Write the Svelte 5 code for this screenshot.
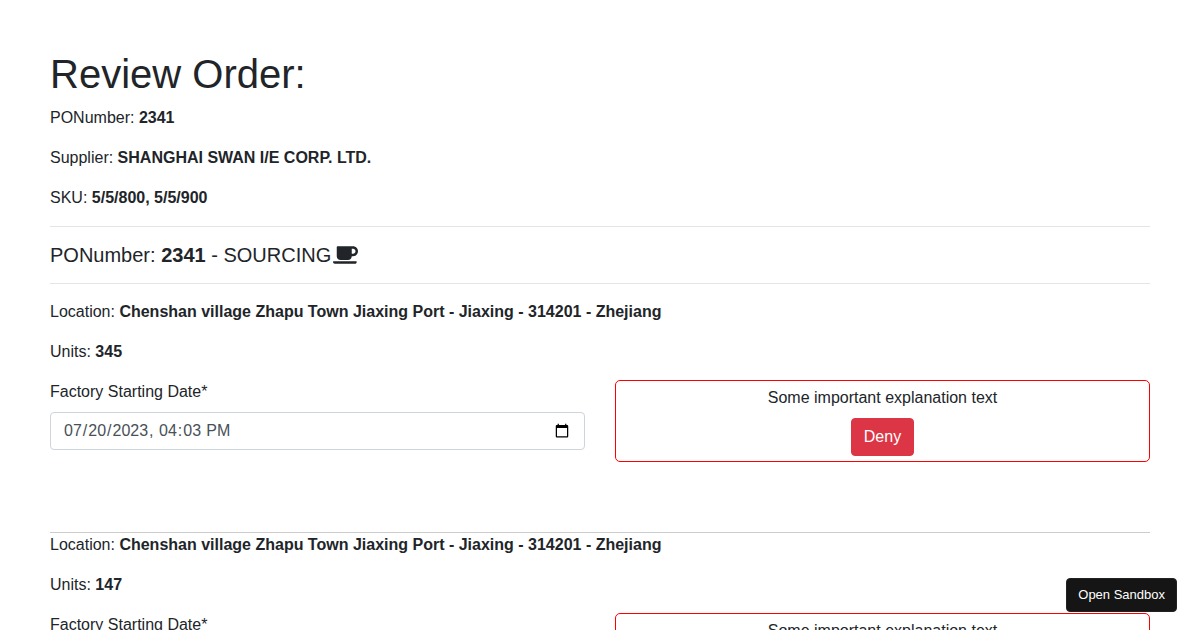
<script>
  const order = {
    number: '2341',
    supplier: 'SHANGHAI SWAN I/E CORP. LTD.',
    sku: '5/5/800, 5/5/900',
    stage: 'SOURCING'
  };
  const place = 'Chenshan village Zhapu Town Jiaxing Port - Jiaxing - 314201 - Zhejiang';
  let locations = $state([
    { id: 1, place, units: 345, start: '2023-07-20T16:03' },
    { id: 2, place, units: 147, start: '2023-07-20T16:03' }
  ]);
</script>

<main>
  <h1>Review Order:</h1>
  <p>PONumber: <b>{order.number}</b></p>
  <p>Supplier: <b>{order.supplier}</b></p>
  <p>SKU: <b>{order.sku}</b></p>
  <hr />
  <h2>
    <span>PONumber: <b>{order.number}</b> - {order.stage}</span>
    <svg viewBox="0 0 640 512" aria-hidden="true">
      <path fill="currentColor" d="M192 384h192c53 0 96-43 96-96h32c70.600 0 128-57.400 128-128S582.600 32 512 32H120c-13.300 0-24 10.700-24 24v232c0 53 43 96 96 96zM512 96c35.300 0 64 28.700 64 64s-28.700 64-64 64h-32V96h32zm47.700 384H48.300c-47.600 0-61-64-36-64h583.300c25 0 11.800 64-35.900 64z" />
    </svg>
  </h2>
  <hr />
  {#each locations as loc (loc.id)}
    <section>
      <p>Location: <b>{loc.place}</b></p>
      <p>Units: <b>{loc.units}</b></p>
      <div class="row">
        <div class="field">
          <label for="start-{loc.id}">Factory Starting Date*</label>
          <input id="start-{loc.id}" type="datetime-local" bind:value={loc.start} />
        </div>
        <div class="notice">
          <span>Some important explanation text</span>
          <button class="deny" type="button">Deny</button>
        </div>
      </div>
    </section>
  {/each}
</main>
<button class="sandbox" type="button">Open Sandbox</button>

<style>
  :global(html) {
    scrollbar-width: none;
  }
  :global(body) {
    margin: 0;
    background: #fff;
    color: #212529;
    font: 16px/24px "Liberation Sans", Arial, sans-serif;
  }
  :global(*) {
    box-sizing: border-box;
  }
  main {
    padding: 50px;
  }
  h1 {
    margin: 0 0 8px;
    font-size: 40px;
    line-height: 48px;
    font-weight: 500;
  }
  p {
    margin: 0 0 16px;
  }
  hr {
    margin: 16px 0;
    border: 0;
    border-top: 1px solid rgba(0, 0, 0, 0.1);
  }
  h2 {
    display: flex;
    align-items: center;
    gap: 2px;
    margin: 0;
    font-size: 20px;
    line-height: 24px;
    font-weight: 500;
  }
  h2 svg {
    width: 25px;
    height: 20px;
  }
  section {
    padding-bottom: 70px;
    border-bottom: 1px solid #ccc;
  }
  .row {
    display: grid;
    grid-template-columns: 1fr 1fr;
    gap: 30px;
  }
  .field label {
    display: block;
    margin-bottom: 8px;
  }
  .field input {
    display: block;
    width: 100%;
    height: 38px;
    padding: 6px 12px;
    border: 1px solid #ced4da;
    border-radius: 4px;
    background: #fff;
    color: #495057;
    font: inherit;
  }
  .notice {
    display: flex;
    flex-direction: column;
    align-items: center;
    gap: 8px;
    padding: 5px;
    border: 1px solid #f00;
    border-radius: 5px;
  }
  .deny {
    height: 38px;
    padding: 6px 12px;
    border: 1px solid #dc3545;
    border-radius: 4px;
    background: #dc3545;
    color: #fff;
    font: inherit;
  }
  .sandbox {
    position: fixed;
    right: 23px;
    bottom: 18px;
    height: 34px;
    padding: 0 11px;
    border: 1px solid #222;
    border-radius: 4px;
    background: #151515;
    color: #fff;
    font-family: inherit;
    font-size: 13px;
    line-height: 20px;
  }
</style>
